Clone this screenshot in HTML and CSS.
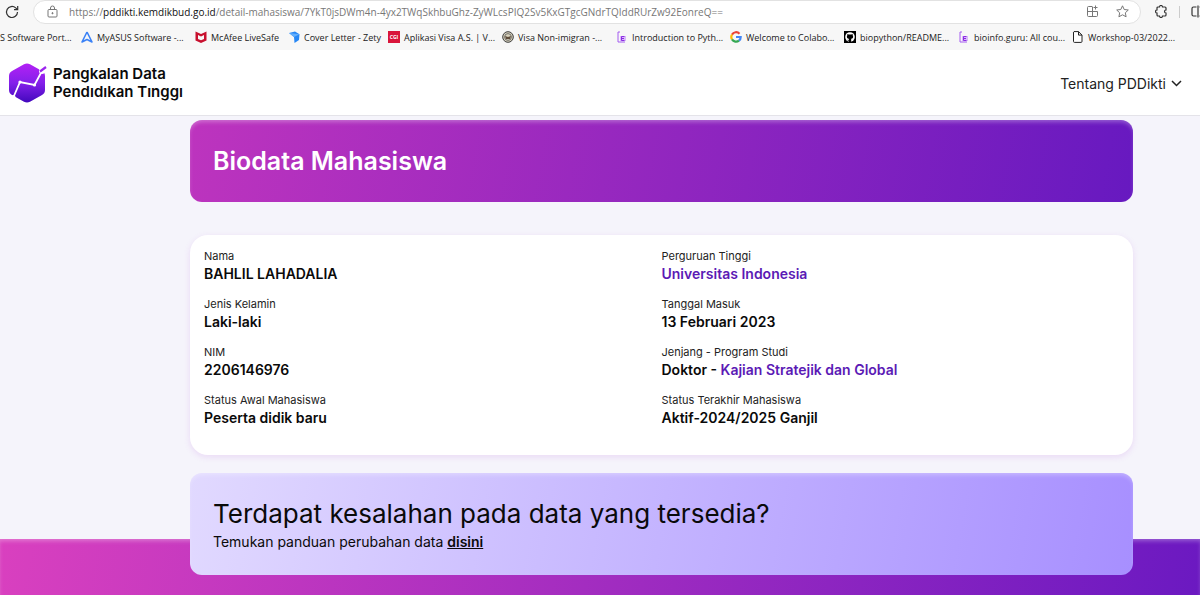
FILE: index.html
```html
<!DOCTYPE html>
<html lang="id">
<head>
    <meta charset="UTF-8">
    <meta name="viewport" content="width=device-width, initial-scale=1.0">
    <title>PDDikti - Biodata Mahasiswa</title>
    <link rel="stylesheet" href="styles.css">
</head>
<body>
    <div class="browser">
        <div class="toolbar">
            <button class="tool" aria-label="Reload">
                <svg width="14" height="14" viewBox="0 0 14 14" fill="none" stroke="#333" stroke-width="1.2"><path d="M12.5 7a5.5 5.5 0 1 1-1.8-4.1L12.6 4.6M12.7 1v3.7H9"/></svg>
            </button>
            <div class="address">
                <svg width="11" height="13" viewBox="0 0 11 13" fill="none" stroke="#777"><rect x="1" y="4.5" width="9" height="7.5" rx="1"/><path d="M3.5 4.5V3a2 2 0 0 1 4 0v1.5"/><circle cx="5.5" cy="8.2" r=".6" fill="#777"/></svg>
                <span class="url">https://<b>pddikti.kemdikbud.go.id</b>/detail-mahasiswa/7YkT0jsDWm4n-4yx2TWqSkhbuGhz-ZyWLcsPIQ2Sv5KxGTgcGNdrTQIddRUrZw92EonreQ==</span>
                <button class="tool" aria-label="Apps">
                    <svg width="13" height="13" viewBox="0 0 13 13" fill="none" stroke="#777"><path d="M6 1.5H2.5a1 1 0 0 0-1 1v8a1 1 0 0 0 1 1h8a1 1 0 0 0 1-1V6.5h-10M6.5 1.5v10M9.5 .5v4M7.5 2.5h4"/></svg>
                </button>
                <button class="tool" aria-label="Favorite">
                    <svg width="13" height="13" viewBox="0 0 13 13" fill="none" stroke="#777" stroke-linejoin="round"><path d="M6.5 .8l1.7 3.7 4.1.5-3 2.8.8 4-3.6-2-3.6 2 .8-4-3-2.8 4.1-.5z"/></svg>
                </button>
            </div>
            <div class="tools">
                <button class="tool" aria-label="Extensions">
                    <svg width="13" height="13" viewBox="0 0 13 13" fill="none" stroke="#333" stroke-width="1.2"><path d="M4.5 2a1.5 1.5 0 0 1 3 0H10a1 1 0 0 1 1 1v2a1.5 1.5 0 1 0 0 3v2a1 1 0 0 1-1 1H7.5a1.5 1.5 0 0 1-3 0H3a1 1 0 0 1-1-1V8a1.5 1.5 0 0 1 0-3V3a1 1 0 0 1 1-1z"/></svg>
                </button>
                <span class="divider"></span>
                <button class="tool" aria-label="Split screen">
                    <svg width="14" height="13" viewBox="0 0 14 13" fill="none" stroke="#333" stroke-width="1.2"><path d="M5.5 2h-3a1.5 1.5 0 0 0-1.5 1.5v6A1.5 1.5 0 0 0 2.5 11h3M8.5 2h3A1.5 1.5 0 0 1 13 3.5v6a1.5 1.5 0 0 1-1.5 1.5h-3M7 .5v12"/></svg>
                </button>
            </div>
        </div>
        <nav class="bookmarks">
            <a class="bookmark first" href="#">S Software Port...</a>
            <a class="bookmark" href="#"><svg viewBox="0 0 12 12" fill="none" stroke="#3b82f6" stroke-width="1.6" stroke-linejoin="round"><path d="M6 1L1 11l5-2.5 5 2.5L6 1"/></svg>MyASUS Software -...</a>
            <a class="bookmark short" href="#"><svg viewBox="0 0 12 12"><path d="M.5 .5L6 3l5.500-2.500v9L6 12 .5 9.500z" fill="#c8102e"/><path d="M3 4l3 1.500L9 4v4L6 9.300 3 8z" fill="#f7f7f7"/></svg>McAfee LiveSafe</a>
            <a class="bookmark medium" href="#"><svg viewBox="0 0 12 12"><path d="M1 2l6-1.500 4.500 2.800L11 9l-4.500 3-.5-6z" fill="#2687f5"/><path d="M1 2l10.500 1.300L6 6z" fill="#63aefb"/></svg>Cover Letter - Zety</a>
            <a class="bookmark" href="#"><svg viewBox="0 0 12 12"><rect width="12" height="12" fill="#d9153a"/><text x="6" y="7.8" text-anchor="middle" font-size="5" font-weight="700" fill="#fff">CGI</text></svg>Aplikasi Visa A.S. | V...</a>
            <a class="bookmark" href="#"><svg viewBox="0 0 12 12"><circle cx="6" cy="6" r="5.3" fill="#d8d2bd" stroke="#3c3c3c"/><circle cx="6" cy="6" r="3.4" fill="none" stroke="#555" stroke-width=".8"/><path d="M3 5l3 1 3-1-1 3H4z" fill="#5e4c3b"/></svg>Visa Non-imigran -...</a>
            <a class="bookmark" href="#"><svg viewBox="0 0 12 12" fill="none"><path d="M4 1H2v10h7" stroke="#a45cf0"/><rect x="4" y="5" width="6" height="5" fill="#d9b8fa"/><path d="M8.5 5.5h-3v4h3M5.5 7.5H8" stroke="#8a2be2"/></svg>Introduction to Pyth...</a>
            <a class="bookmark" href="#"><svg viewBox="0 0 12 12" fill="none" stroke-width="2.2"><path d="M9.5 2.700A4.700 4.700 0 0 0 2 3.600" stroke="#ea4335"/><path d="M2 3.600a4.700 4.700 0 0 0 0 4.800" stroke="#fbbc05"/><path d="M2 8.400a4.700 4.700 0 0 0 7 1.200" stroke="#34a853"/><path d="M9 9.600A4.500 4.500 0 0 0 10.700 6H6" stroke="#4285f4"/></svg>Welcome to Colabo...</a>
            <a class="bookmark" href="#"><svg viewBox="0 0 12 12"><rect width="12" height="12" fill="#000"/><circle cx="6" cy="6" r="4.8" fill="#fff"/><path d="M3.4 3l1.400.6a5 5 0 0 1 2.400 0L8.600 3l.2 1.500c1 1.600-.1 3.100-1.600 3.300v3.300H4.800V9.600c-1.200.2-1.400-.6-1.900-.9.900-.2 1 .5 1.900.2V7.800C3.300 7.600 2.200 6.100 3.200 4.500z" fill="#000"/></svg>biopython/README...</a>
            <a class="bookmark" href="#"><svg viewBox="0 0 12 12" fill="none"><path d="M4 1H2v10h7" stroke="#a45cf0"/><rect x="4" y="5" width="6" height="5" fill="#d9b8fa"/><path d="M8.5 5.5h-3v4h3M5.5 7.5H8" stroke="#8a2be2"/></svg>bioinfo.guru: All cou...</a>
            <a class="bookmark" href="#"><svg viewBox="0 0 12 12" fill="#fff" stroke="#222" stroke-linejoin="round"><path d="M2 .6h4.500l3.500 3.500v6.300a1 1 0 0 1-1 1H2.500a1 1 0 0 1-1-1V1.100zM6.500 .6v3.500H10"/></svg>Workshop-03/2022...</a>
        </nav>
    </div>

    <header class="header">
        <a class="brand" href="#">
            <svg width="40" height="40" viewBox="0 0 40 40" fill="none">
                <defs>
                    <linearGradient id="hex" x1="0" y1="0" x2="0" y2="1">
                        <stop offset="0" stop-color="#b321f5"/>
                        <stop offset=".5" stop-color="#8420ea"/>
                        <stop offset="1" stop-color="#4208bd"/>
                    </linearGradient>
                </defs>
                <path d="M16 1.200q3-1.600 6 0L34 8q3 1.600 3 5v14q0 3.400-3 5l-12 6.700q-3 1.600-6 0L4 32q-3-1.600-3-5V13q0-3.400 3-5z" fill="url(#hex)"/>
                <path d="M5.500 34L12 19l14.500 3L34 8" stroke="#fff" stroke-width="1.800"/>
                <g fill="#fff"><circle cx="5.500" cy="34" r="2"/><circle cx="12" cy="19" r="1.600"/><circle cx="26.500" cy="22" r="1.600"/><circle cx="34" cy="8" r="3"/></g>
                <path d="M32 8.500l6-4.500" stroke="#9c25ee" stroke-width="2.200"/>
            </svg>
            <span>Pangkalan Data<br>Pendıdıkan Tınggı</span>
        </a>
        <button class="menu">Tentang PDDikti
            <svg width="11" height="7" viewBox="0 0 11 7" fill="none" stroke="#222" stroke-width="1.5"><path d="M1 1l4.500 4.500L10 1"/></svg>
        </button>
    </header>

    <main class="content">
        <h1 class="banner">Biodata Mahasiswa</h1>

        <dl class="card">
            <div><dt>Nama</dt><dd>BAHLIL LAHADALIA</dd></div>
            <div><dt>Perguruan Tinggi</dt><dd><a href="#">Universitas Indonesia</a></dd></div>
            <div><dt>Jenis Kelamin</dt><dd>Laki-laki</dd></div>
            <div><dt>Tanggal Masuk</dt><dd>13 Februari 2023</dd></div>
            <div><dt>NIM</dt><dd>2206146976</dd></div>
            <div><dt>Jenjang - Program Studi</dt><dd>Doktor - <a href="#">Kajian Stratejik dan Global</a></dd></div>
            <div><dt>Status Awal Mahasiswa</dt><dd>Peserta didik baru</dd></div>
            <div><dt>Status Terakhir Mahasiswa</dt><dd>Aktif-2024/2025 Ganjil</dd></div>
        </dl>

        <section class="notice">
            <h2>Terdapat kesalahan pada data yang tersedia?</h2>
            <p>Temukan panduan perubahan data <a href="#">disini</a></p>
        </section>
    </main>

    <footer class="footer"></footer>
</body>
</html>
```
FILE: styles.css
```css
* {
    box-sizing: border-box;
}
body {
    margin: 0;
    min-height: 100vh;
    display: flex;
    flex-direction: column;
    overflow: hidden;
    background: #f5f4fb;
    color: #0a0a0a;
    font-family: Inter, sans-serif;
}
h1, h2, p, dl, dd {
    margin: 0;
}
a {
    color: inherit;
    text-decoration: none;
}
button {
    border: none;
    padding: 0;
    background: none;
    font-family: inherit;
}

/* browser bar */
.browser {
    background: #f7f7f7;
    font-family: "Open Sans", sans-serif;
}
.toolbar {
    display: flex;
    align-items: center;
    gap: 14px;
    height: 23px;
    padding-left: 5px;
}
.tool {
    display: flex;
}
.address {
    flex: 1;
    display: flex;
    align-items: center;
    gap: 17px;
    height: 24px;
    padding: 0 11px 0 13px;
    background: #fff;
    border: 1px solid #e2e2e2;
    border-radius: 12px;
}
.url {
    flex: 1;
    margin-left: -6px;
    font-size: 10px;
    white-space: nowrap;
    color: #777;
}
.url b {
    font-weight: 400;
    color: #111;
}
.tools {
    display: flex;
    align-items: center;
    gap: 11px;
    width: 45px;
}
.divider {
    flex: none;
    width: 1px;
    height: 12px;
    background: #ccc;
}
.bookmarks {
    display: flex;
    align-items: center;
    gap: 14px;
    height: 27px;
    padding-top: 1px;
}
.bookmark {
    flex: none;
    display: flex;
    align-items: center;
    gap: 4px;
    width: 100px;
    font-size: 9px;
    white-space: nowrap;
    color: #222;
}
.bookmark svg {
    flex: none;
    width: 12px;
    height: 12px;
}
.bookmark.first {
    width: 67px;
}
.bookmark.short {
    width: 79px;
}
.bookmark.medium {
    width: 86px;
}

/* site header */
.header {
    display: flex;
    align-items: center;
    justify-content: space-between;
    height: 66px;
    padding: 1px 18px 0 8px;
    background: #fff;
    border-bottom: 1px solid #e4e3e9;
}
.brand {
    display: flex;
    align-items: center;
    gap: 5px;
    font-size: 15px;
    font-weight: 600;
    line-height: 18px;
}
.menu {
    display: flex;
    align-items: center;
    gap: 5px;
    font-size: 14px;
    color: #222;
}

/* content */
.content {
    position: relative;
    z-index: 1;
    padding: 4px 67px 0 190px;
}
.banner {
    padding: 23px;
    border-radius: 12px;
    background: linear-gradient(100deg, #bd34be, #6719c0);
    box-shadow: inset 0 3px 4px -1px rgba(255, 255, 255, 0.3);
    color: #fff;
    font-size: 25px;
    font-weight: 600;
    line-height: 36px;
}
.card {
    display: grid;
    grid-template-columns: 1fr 1fr;
    row-gap: 12px;
    margin: 33px 0 18px;
    padding: 13px 14px 27px;
    border-radius: 18px;
    background: #fff;
    box-shadow: 0 2px 6px rgba(180, 80, 220, 0.16);
}
.card dt {
    font-size: 11px;
    line-height: 16px;
    color: #222;
}
.card dd {
    font-size: 14px;
    font-weight: 600;
    line-height: 20px;
}
.card a {
    color: #5b1ab5;
}
.notice {
    padding: 23px;
    border-radius: 12px;
    background: linear-gradient(100deg, #e1d9ff, #a78fff);
    box-shadow: inset 0 3px 4px -1px rgba(255, 255, 255, 0.3);
}
.notice h2 {
    font-size: 26px;
    font-weight: 400;
    line-height: 36px;
}
.notice p {
    font-size: 14px;
    line-height: 20px;
}
.notice a {
    font-weight: 600;
    text-decoration: underline;
}
.footer {
    flex: 1;
    min-height: 56px;
    margin-top: -36px;
    background: linear-gradient(100deg, #d940bf, #6b19c1);
    box-shadow: inset 0 3px 4px -1px rgba(255, 255, 255, 0.3);
}
```
